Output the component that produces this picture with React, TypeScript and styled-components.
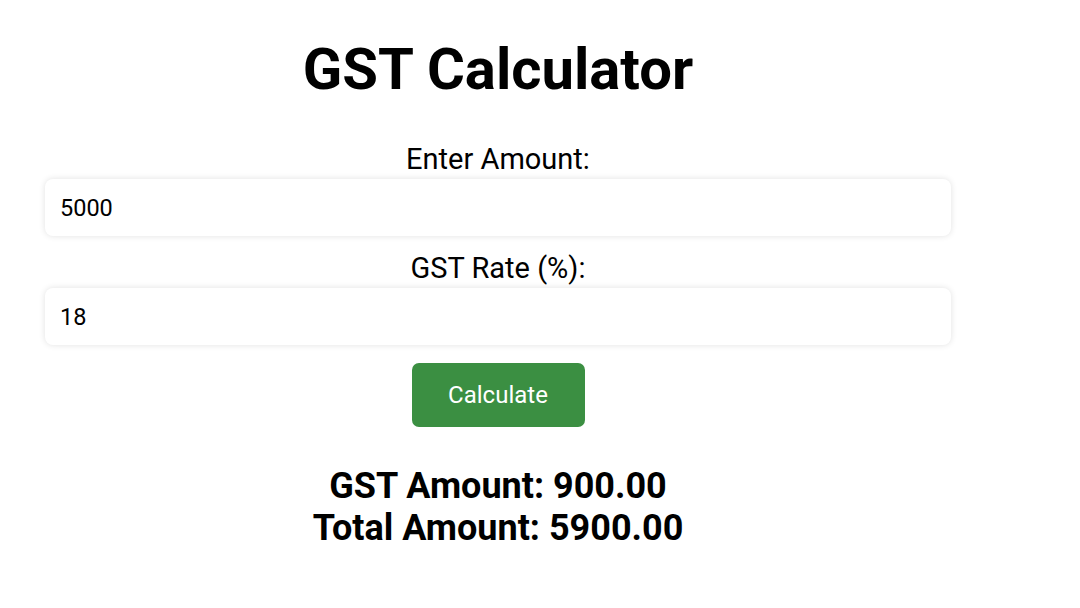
import * as React from 'react'
import styled, { createGlobalStyle } from 'styled-components'

const GlobalStyle = createGlobalStyle`
  body {
    margin: 0;
    background: #ffffff;
    font-family: Roboto, "Noto Sans", sans-serif;
    color: #000;
  }
`

const Page = styled.div`
  width: 996px;
  padding: 0 45px;
  box-sizing: border-box;
  display: flex;
  flex-direction: column;
  align-items: center;
  text-align: center;
`

const Title = styled.h1`
  margin: 34px 0 0;
  font-size: 58px;
  font-weight: 700;
  line-height: 70px;
`

const Field = styled.div<{ $top: number }>`
  width: 100%;
  display: flex;
  flex-direction: column;
  align-items: center;
  margin-top: ${(p) => p.$top}px;
`

const Label = styled.label`
  font-size: 29px;
  line-height: 34px;
  margin-bottom: 3px;
`

const Input = styled.input`
  width: 100%;
  height: 57px;
  box-sizing: border-box;
  border: none;
  outline: none;
  border-radius: 8px;
  padding: 0 15px;
  font-family: Roboto, sans-serif;
  font-size: 23.5px;
  color: #000;
  background: #fff;
  box-shadow: 0 0 6px rgba(0, 0, 0, 0.12);
`

const Button = styled.button`
  margin-top: 18px;
  width: 173px;
  height: 64px;
  border: none;
  border-radius: 7px;
  background: #3b8f42;
  color: #fff;
  font-family: Roboto, sans-serif;
  font-size: 24px;
`

const Result = styled.div`
  margin-top: 38px;
  font-size: 36px;
  font-weight: 700;
  line-height: 42px;
`

export default function App() {
  const [amount, setAmount] = React.useState('5000')
  const [rate, setRate] = React.useState('18')
  const gst = (parseFloat(amount) * parseFloat(rate)) / 100
  const total = parseFloat(amount) + gst

  return (
    <>
      <GlobalStyle />
      <Page>
        <Title>GST Calculator</Title>
        <Field $top={38}>
          <Label>Enter Amount:</Label>
          <Input value={amount} onChange={(e) => setAmount(e.target.value)} />
        </Field>
        <Field $top={15}>
          <Label>GST Rate (%):</Label>
          <Input value={rate} onChange={(e) => setRate(e.target.value)} />
        </Field>
        <Button>Calculate</Button>
        <Result>
          <div>GST Amount: {gst.toFixed(2)}</div>
          <div>Total Amount: {total.toFixed(2)}</div>
        </Result>
      </Page>
    </>
  )
}
